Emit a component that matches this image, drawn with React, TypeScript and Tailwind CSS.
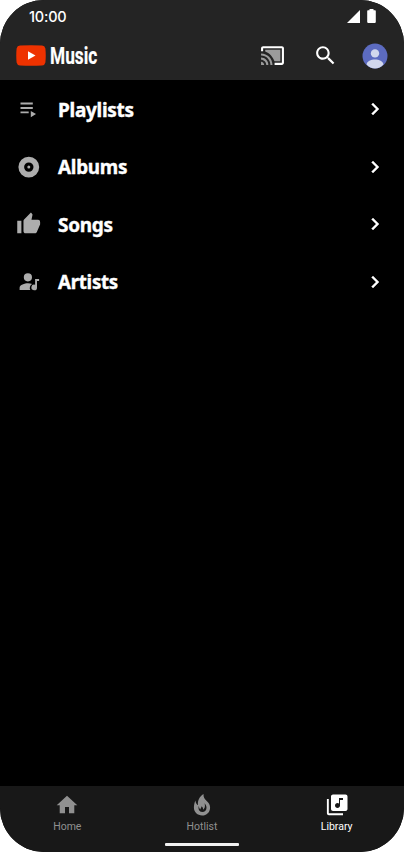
import type { ReactNode } from "react";

function Glyph({ children, className = "size-6" }: { children: ReactNode; className?: string }) {
  return (
    <svg viewBox="0 0 24 24" fill="currentColor" className={`block shrink-0 ${className}`}>
      {children}
    </svg>
  );
}

function StatusBar() {
  return (
    <div className="flex h-8 items-center justify-between pr-7 pl-[29px]">
      <span className="font-['Inter',sans-serif] text-[14.500px] leading-[33px] font-medium tracking-[-0.2px] text-white">10:00</span>
      <div className="flex items-center gap-[7px] text-white">
        <svg viewBox="0 0 13 13" className="h-[13px] w-[13px]" fill="currentColor">
          <path d="M13 0v13H0z" />
        </svg>
        <svg viewBox="0 0 9 14" className="h-[14px] w-[9px]" fill="currentColor">
          <path d="M2.500 0h4v1.300H8q.8 0 .8.8v11q0 .8-.8.8H1q-.8 0-.8-.8v-11q0-.8.8-.8h1.500z" />
        </svg>
      </div>
    </div>
  );
}

function AppBar() {
  return (
    <div className="flex h-12 items-center px-4 pb-[1px]">
      <svg viewBox="0 0 30 21" className="h-[21px] w-[30px]">
        <path
          d="M4 .6Q15-.3 26 .6q2.800.2 3.400 3 .7 6.900 0 13.800-.6 2.800-3.400 3-11 .9-22 0-2.800-.2-3.400-3-.7-6.900 0-13.800.6-2.800 3.400-3z"
          fill="#ee3200"
        />
        <path d="M12 6.200v8.600l7.500-4.300z" fill="#fff" />
      </svg>
      <span className="ml-[4px] w-[47px] origin-left scale-x-[0.72] pt-[1px] font-['Roboto',sans-serif] text-[24px] leading-none font-bold text-white [-webkit-text-stroke:0.200px_white]">
        Music
      </span>
      <div className="ml-auto flex items-center">
        <Glyph className="size-[25px] text-white">
          <path d="M21 3H3c-1.100 0-2 .9-2 2v3h2V5h18v14h-7v2h7c1.100 0 2-.9 2-2V5c0-1.100-.9-2-2-2z" />
          <path
            fill="#9b9b9b"
            d="M19.500 6.500H5v1.630c3.960 1.280 7.590 5.410 8.870 9.370h5.630zM1 18v3h3c0-1.660-1.340-3-3-3zm0-4v2c2.760 0 5 2.240 5 5h2c0-3.870-3.130-7-7-7zm0-4v2c4.970 0 9 4.030 9 9h2c0-6.080-4.930-11-11-11z"
          />
        </Glyph>
        <Glyph className="ml-7 size-[25px] text-white">
          <path d="M15.500 14h-.79l-.28-.27C15.410 12.590 16 11.110 16 9.500 16 5.910 13.090 3 9.500 3S3 5.910 3 9.500 5.910 16 9.500 16c1.610 0 3.090-.59 4.230-1.570l.27.28v.79l5 4.990L20.490 19l-4.990-5zm-6 0C7.010 14 5 11.990 5 9.500S7.010 5 9.500 5 14 7.010 14 9.500 11.990 14 9.500 14z" />
        </Glyph>
        <svg viewBox="0 0 26 26" className="ml-[24px] size-[26px]">
          <circle cx="13" cy="13" r="12.500" fill="#5c6bc0" />
          <circle cx="13" cy="10.400" r="4.200" fill="#d1d7ed" />
          <path d="M4.600 21.400C5.200 14.900 20.800 14.900 21.400 21.400 17 26.700 9 26.700 4.600 21.400z" fill="#d1d7ed" />
        </svg>
      </div>
    </div>
  );
}

const rows = [
  {
    label: "Playlists",
    stretch: "scale-x-[0.95]",
    icon: (
      <path d="M3.500 5.500h12.300v1.900H3.500zm0 4.500h12.300v1.900H3.500zm0 4.400h8.200v1.900H3.500zM13.800 14l5.200 3.100-5.200 3.100z" />
    ),
  },
  {
    label: "Albums",
    stretch: "scale-x-[0.945]",
    icon: (
      <path
        fillRule="evenodd"
        d="M11.800 1.700a10.400 10.400 0 1 0 0 20.800 10.400 10.400 0 0 0 0-20.800zm0 5.700a4.700 4.700 0 1 1 0 9.400 4.700 4.700 0 0 1 0-9.400zm0 3.200a1.500 1.500 0 1 0 0 3 1.500 1.500 0 0 0 0-3z"
      />
    ),
  },
  {
    label: "Songs",
    stretch: "scale-x-[0.95]",
    icon: (
      <path
        transform="translate(-.8 -.5) scale(1.040)"
        d="M1 21h4V9H1v12zm22-11c0-1.100-.9-2-2-2h-6.310l.95-4.570.03-.32c0-.41-.17-.79-.44-1.060L14.170 1 7.590 7.590C7.220 7.950 7 8.450 7 9v10c0 1.100.9 2 2 2h9c.83 0 1.540-.5 1.840-1.220l3.020-7.050c.09-.23.14-.47.14-.73v-2z"
      />
    ),
  },
  {
    label: "Artists",
    stretch: "scale-x-[0.935]",
    icon: (
      <path d="M10.900 3.200a4.100 4.100 0 1 1 0 8.200 4.100 4.100 0 0 1 0-8.200zM2.600 20v-2.200c0-2.900 5.100-4.500 8.400-4.500 1.500 0 2.900.2 4.200.8a4.200 4.200 0 0 0-1.900 5.900zM18.100 9h4v2h-2.100v6.400a2.800 2.800 0 1 1-1.900-2.600z" />
    ),
  },
];

function LibraryList() {
  return (
    <ul className="flex-1 bg-black pt-[0.400px]">
      {rows.map((row) => (
        <li key={row.label} className="flex h-[57.600px] items-center pr-[17px] pl-[17px]">
          <Glyph className="size-6 text-[#adadad]">{row.icon}</Glyph>
          <span
            className={`ml-[16.500px] origin-left pt-[1px] font-['Noto_Sans',sans-serif] text-[20px] leading-none font-bold tracking-[-0.3px] text-white [-webkit-text-stroke:0.400px_white] ${row.stretch}`}
          >
            {row.label}
          </span>
          <Glyph className="ml-auto size-6 text-white">
            <path stroke="currentColor" strokeWidth=".4" d="M10 6 8.590 7.410 13.170 12l-4.580 4.590L10 18l6-6z" />
          </Glyph>
        </li>
      ))}
    </ul>
  );
}

const tabs = [
  {
    label: "Home",
    tone: "text-[#909090]",
    icon: <path d="M10 20.300v-6.300h4v6.300h5.300V12.300h3L12 2.800 1.700 12.300h3v8z" />,
  },
  {
    label: "Hotlist",
    tone: "text-[#909090]",
    icon: (
      <path
        fillRule="evenodd"
        d="M13.500 1c-.2 3.300 1.100 5 3.200 7 2.200 2.100 3.400 4 3.400 6.700 0 4.400-3.500 7.800-8 7.800s-8.200-3.400-8.200-7.700c0-2.900.5-5.200 1.500-7.400.3 2.600 1.200 4 2.700 4.800C7.300 8.200 9.400 3.500 13.500 1zM14.600 10.200c.8 3.200.3 5-1.500 6.600.1-1.600-.4-2.600-1.500-3.600-.3 1.500-1 2.300-1.400 3.200-.9-.9-1.300-2.200-1.300-3.600-1.100 3.200.3 6.200 3.300 6.200 2.700 0 4.500-1.900 4.300-4.600-.1-1.700-.9-3-1.900-4.200z"
      />
    ),
  },
  {
    label: "Library",
    tone: "text-white",
    icon: (
      <path d="M20.500 1.500H8c-1.100 0-2 .9-2 2V16c0 1.100.9 2 2 2h12.500c1.100 0 2-.9 2-2V3.500c0-1.100-.9-2-2-2zM18 7h-3v5.500c0 1.380-1.120 2.500-2.500 2.500S10 13.880 10 12.500s1.120-2.500 2.500-2.500c.57 0 1.080.19 1.500.51V5h4v2zM3.800 6H1.900v14.200c0 1.100.9 2 2 2H18v-2H3.800V6z" />
    ),
  },
];

function BottomNav() {
  return (
    <nav className="flex h-[66px] flex-col bg-[#181818]">
      <div className="grid grid-cols-3 pt-[7px]">
        {tabs.map((tab) => (
          <div key={tab.label} className={`flex flex-col items-center gap-[3px] ${tab.tone}`}>
            <Glyph>{tab.icon}</Glyph>
            <span className="font-['Roboto',sans-serif] text-[10.500px] leading-[13px]">{tab.label}</span>
          </div>
        ))}
      </div>
      <div className="mx-auto mt-auto mb-[6px] h-[3px] w-[74px] rounded-[1px] bg-[#f1f1f1]" />
    </nav>
  );
}

export default function App() {
  return (
    <div className="h-[852px] w-[404px] bg-white">
      <div className="flex h-full flex-col overflow-hidden rounded-[44px] bg-black">
        <header className="h-20 bg-[#242424]">
          <StatusBar />
          <AppBar />
        </header>
        <LibraryList />
        <BottomNav />
      </div>
    </div>
  );
}
